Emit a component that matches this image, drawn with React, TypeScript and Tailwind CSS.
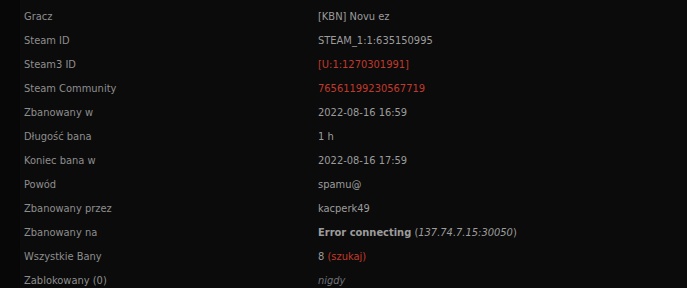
import React from "react";

const rows: { label: string; value: React.ReactNode }[] = [
  { label: "Gracz", value: "[KBN] Novu ez" },
  { label: "Steam ID", value: "STEAM_1:1:635150995" },
  { label: "Steam3 ID", value: <span className="text-[#c03a2c]">[U:1:1270301991]</span> },
  { label: "Steam Community", value: <span className="text-[#c03a2c]">76561199230567719</span> },
  { label: "Zbanowany w", value: "2022-08-16 16:59" },
  { label: "Długość bana", value: "1 h" },
  { label: "Koniec bana w", value: "2022-08-16 17:59" },
  { label: "Powód", value: "spamu@" },
  { label: "Zbanowany przez", value: "kacperk49" },
  {
    label: "Zbanowany na",
    value: (
      <span>
        <b className="font-bold">Error connecting</b> (<i>137.74.7.15:30050</i>)
      </span>
    ),
  },
  {
    label: "Wszystkie Bany",
    value: (
      <span>
        8 <span className="text-[#c03a2c]">(szukaj)</span>
      </span>
    ),
  },
  { label: "Zablokowany (0)", value: <i className="text-[#6e7178]">nigdy</i> },
];

export default function App() {
  return (
    <div className="flex h-[288px] w-[687px] overflow-hidden bg-[#070707] font-['DejaVu_Sans_Condensed','DejaVu_Sans',sans-serif] text-[11px] text-[#9a9a9a]">
      <div className="w-[20px] shrink-0" />
      <div className="flex-1 bg-[#0b0b0b] pt-[5px]">
        {rows.map((r) => (
          <div key={r.label} className="flex h-[24px] items-center">
            <div className="w-[298px] shrink-0 pl-[4px] text-[#8e8e8e]">{r.label}</div>
            <div className="text-[#9c9c9c]">{r.value}</div>
          </div>
        ))}
      </div>
    </div>
  );
}
